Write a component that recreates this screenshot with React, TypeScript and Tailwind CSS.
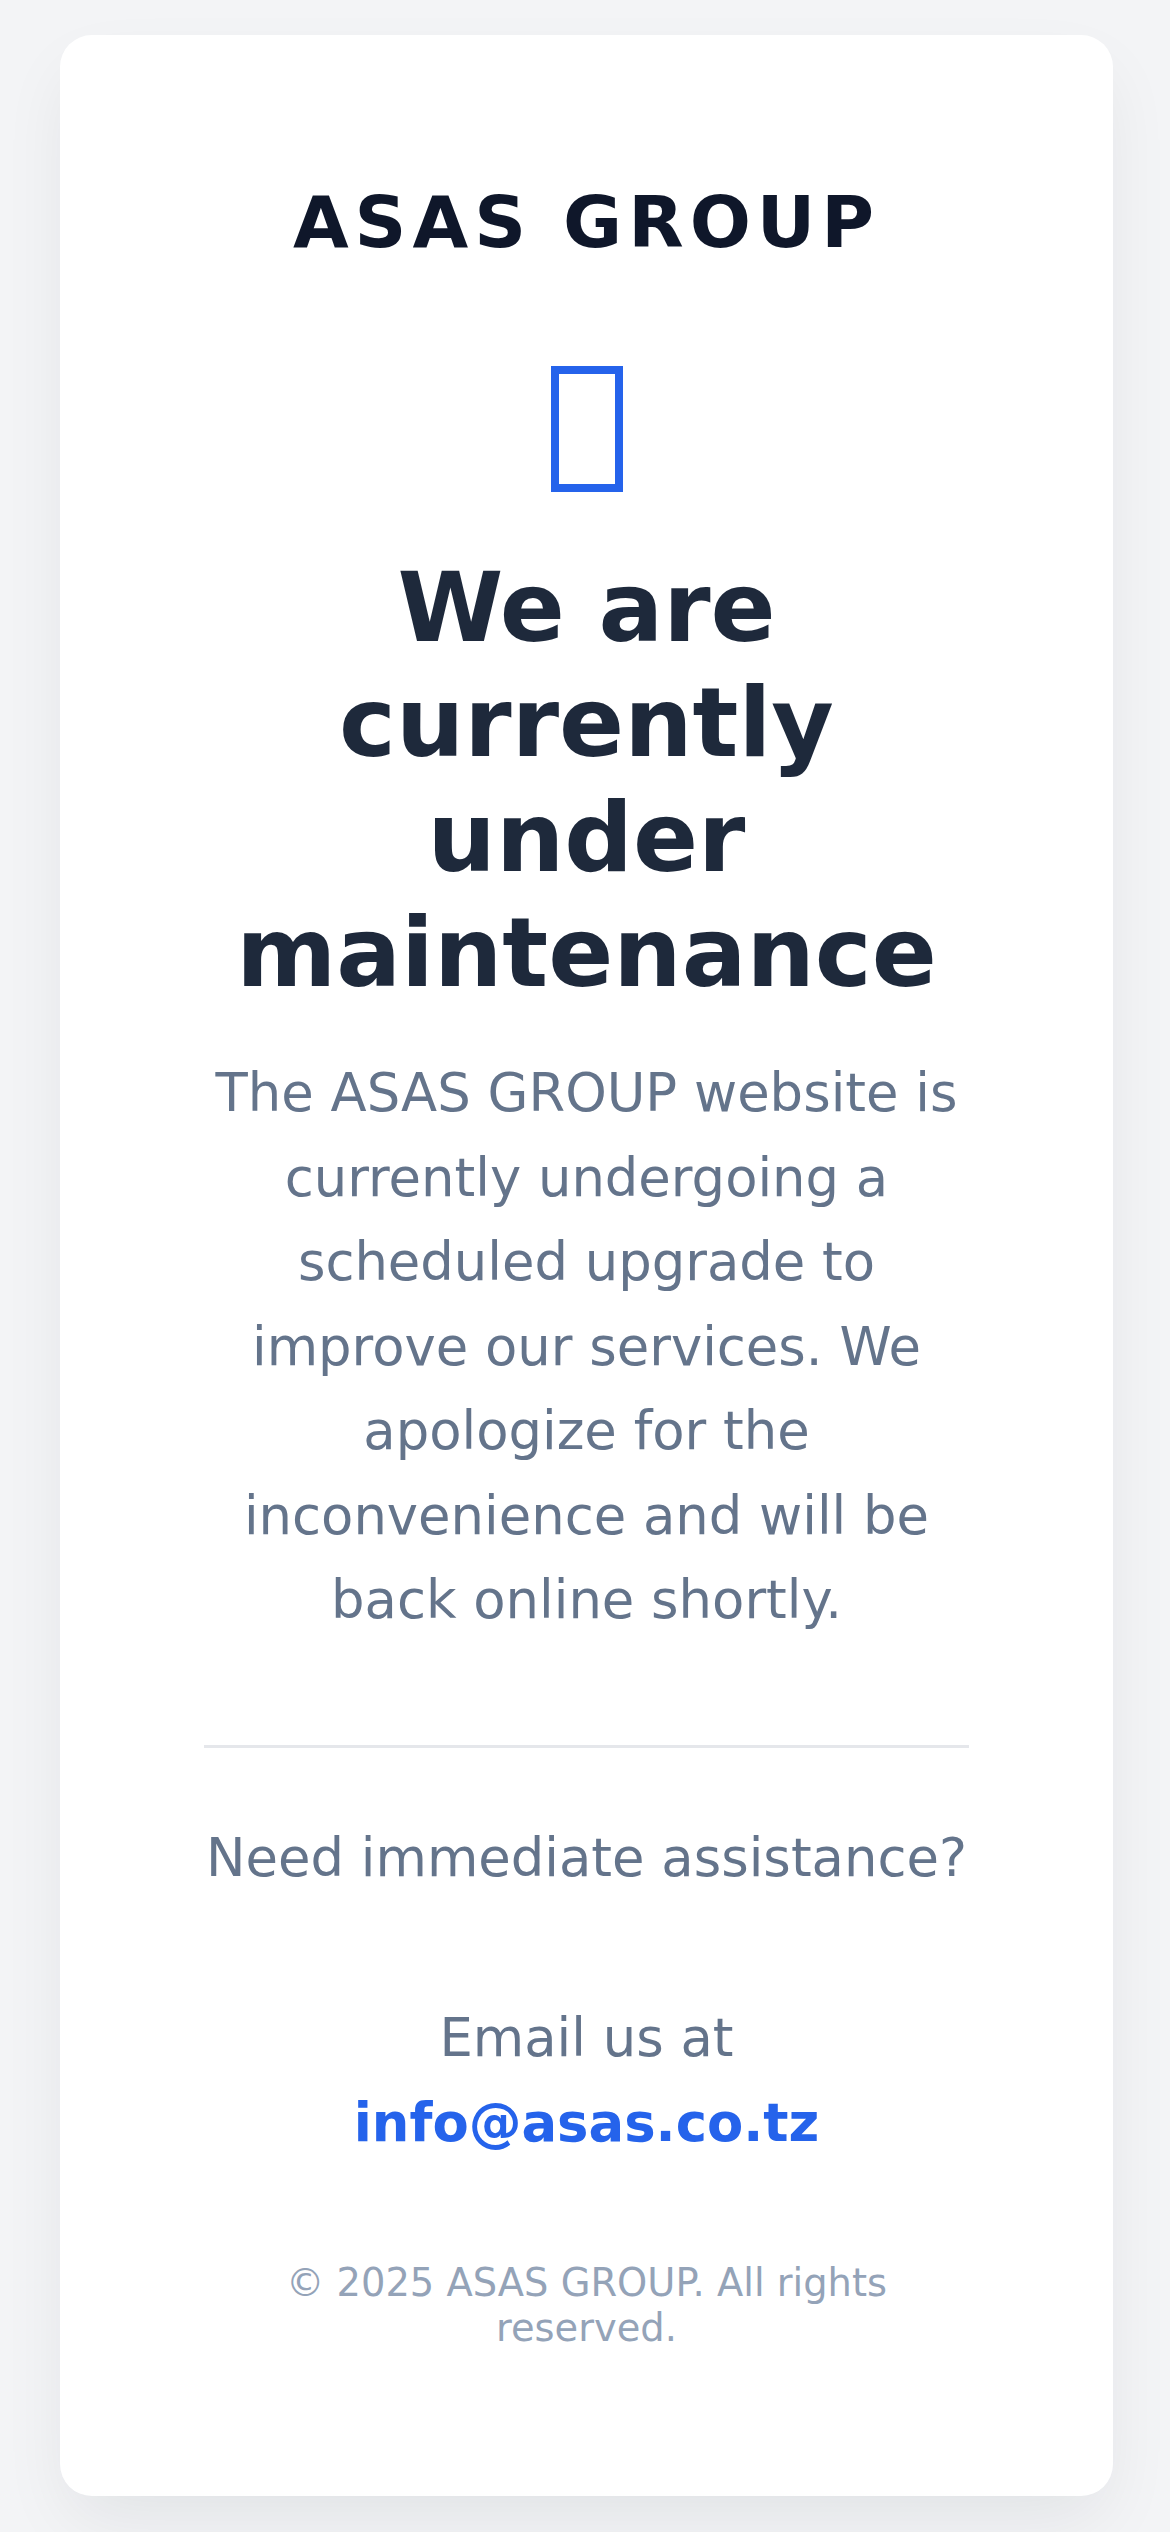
export default function App() {
  return (
    <div className="min-h-[2532px] bg-[#f3f4f6] pt-[35px] pb-[37px] font-['DejaVu_Sans',sans-serif]">
      <main className="ml-[60px] w-[1053px] rounded-[32px] bg-white px-[144px] pt-[144px] pb-[146px] text-center shadow-[0_30px_70px_-10px_rgba(15,23,42,0.08)]">
        {/* brand */}
        <div className="text-[72px] leading-[86px] font-bold tracking-[6px] text-[#0f172a]">ASAS GROUP</div>

        <div className="mt-[101px] flex justify-center">
          <div className="h-[126px] w-[72px] border-[8px] border-[#2563eb]" />
        </div>

        <h1 className="mt-[59px] text-[96px] leading-[115px] font-bold text-[#1e293b]">
          We are currently under maintenance
        </h1>

        <p className="mt-[40px] text-[52.8px] leading-[84.5px] text-[#64748b]">
          The ASAS GROUP website is currently undergoing a scheduled upgrade to improve our services. We apologize for the
          inconvenience and will be back online shortly.
        </p>

        <hr className="mt-[102px] border-0 border-t-[3px] border-[#e5e7eb]" />

        <p className="mt-[68px] text-[52.8px] leading-[84.5px] text-[#64748b]">Need immediate assistance?</p>

        <p className="mt-[96px] text-[52.8px] leading-[84.5px] text-[#64748b]">
          Email us at
          <br />
          <a href="mailto:info@asas.co.tz" className="font-bold text-[#2563eb]">
            info@asas.co.tz
          </a>
        </p>

        <footer className="mt-[96px] text-[38.4px] leading-[44.7px] text-[#94a3b8]">
          © 2025 ASAS GROUP. All rights reserved.
        </footer>
      </main>
    </div>
  );
}
